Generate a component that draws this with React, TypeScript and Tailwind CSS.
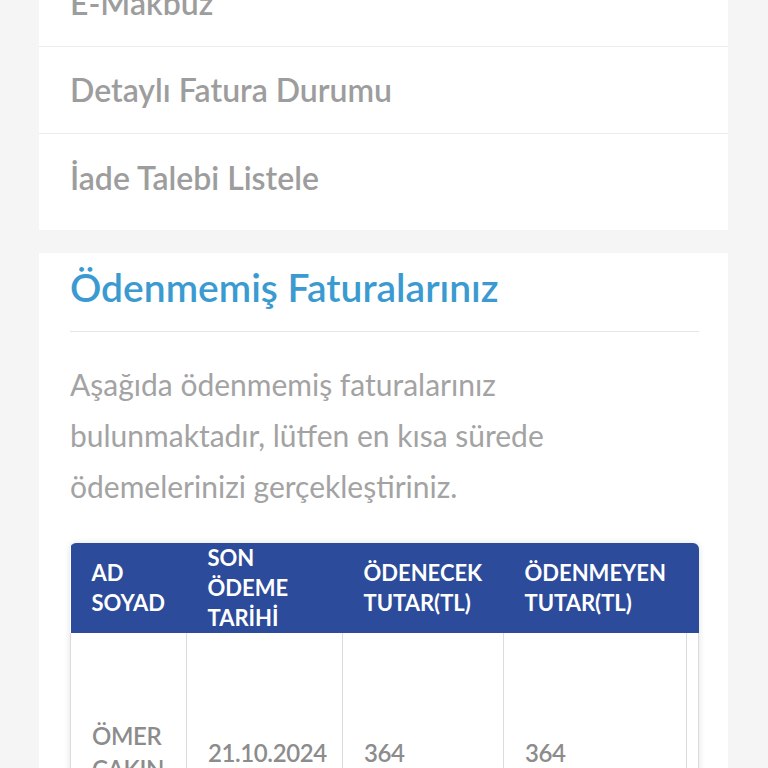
import React from "react"

const menu = ["E-Makbuz", "Detaylı Fatura Durumu", "İade Talebi Listele"]

export default function App() {
  return (
    <main
      className="min-h-screen w-full bg-[#f5f5f5] overflow-hidden"
      style={{ fontFamily: "Lato, 'Open Sans', sans-serif" }}
    >
      <div className="-mt-[40px] pl-[39px] pr-[40px] flex flex-col gap-[23px]">
        <section className="bg-white pb-[9px]">
          {menu.map((m, i) => (
            <div
              key={m}
              className={
                "h-[87px] flex items-center px-[31px] text-[32px] text-[#9d9d9d] font-semibold " +
                (i < menu.length - 1 ? "border-b border-[#ececec]" : "")
              }
            >
              {m}
            </div>
          ))}
        </section>

        <section className="bg-white pl-[31px] pr-[29px] pt-[2px] pb-10">
          <h2 className="text-[39px] font-semibold text-[#3b9bd1] leading-[64px]">
            Ödenmemiş Faturalarınız
          </h2>
          <div className="mt-[12px] h-px bg-[#e6e6e6]" />
          <p className="mt-[27px] text-[30px] leading-[51px] text-[#a3a3a3] max-w-[520px]">
            Aşağıda ödenmemiş faturalarınız bulunmaktadır, lütfen en kısa sürede ödemelerinizi gerçekleştiriniz.
          </p>

          <div className="mt-[31px] rounded-t-[6px] overflow-hidden shadow-[0_0_6px_rgba(0,0,0,0.12)]">
            <table className="w-full border-collapse table-fixed">
              <colgroup>
                <col className="w-[116px]" />
                <col className="w-[156px]" />
                <col className="w-[161px]" />
                <col className="w-[183px]" />
                <col />
              </colgroup>
              <thead>
                <tr className="bg-[#2c4b9a] text-white text-[22px] font-bold leading-[30px] h-[90px]">
                  <th className="text-left align-middle pl-[21px] pr-1 font-bold">AD<br />SOYAD</th>
                  <th className="text-left align-middle pl-[21px] pr-1 font-bold">SON<br />ÖDEME<br />TARİHİ</th>
                  <th className="text-left align-middle pl-[21px] pr-1 font-bold">ÖDENECEK<br />TUTAR(TL)</th>
                  <th className="text-left align-middle pl-[21px] pr-1 font-bold">ÖDENMEYEN<br />TUTAR(TL)</th>
                  <th />
                </tr>
              </thead>
              <tbody>
                <tr className="h-[238px] text-[24px] font-semibold text-[#8c8c8c] leading-[33px] tracking-[-0.4px]">
                  <td className="align-middle pl-[21px] border-l border-r border-[#dcdcdc]">ÖMER<br />ÇAKIN</td>
                  <td className="align-middle pl-[21px] border-r border-[#dcdcdc]">21.10.2024</td>
                  <td className="align-middle pl-[21px] border-r border-[#dcdcdc]">364</td>
                  <td className="align-middle pl-[21px] border-r border-[#dcdcdc]">364</td>
                  <td className="border-r border-[#dcdcdc]" />
                </tr>
              </tbody>
            </table>
          </div>
        </section>
      </div>
    </main>
  )
}
